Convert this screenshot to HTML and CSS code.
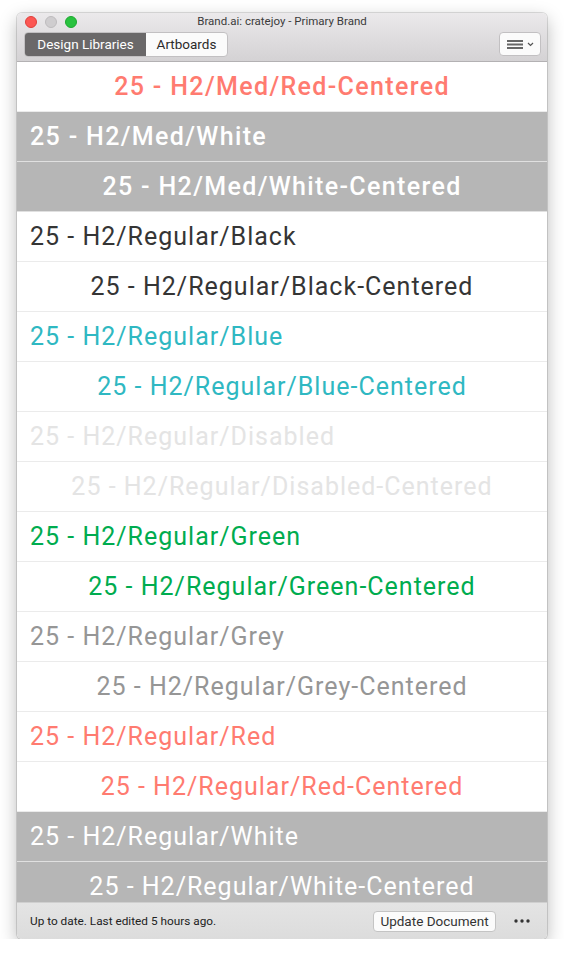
FILE: index.html
```html
<!DOCTYPE html>
<html>
<head>
<meta charset="utf-8">
<link rel="stylesheet" href="styles.css">
</head>
<body>
<div class="window">
  <div class="toolbar">
    <div class="titlerow">
      <div class="lights">
        <span class="light red"></span>
        <span class="light grey"></span>
        <span class="light green"></span>
      </div>
      <div class="title">Brand.ai: cratejoy - Primary Brand</div>
    </div>
    <div class="controls">
      <div class="segmented">
        <span class="seg active">Design Libraries</span>
        <span class="seg">Artboards</span>
      </div>
      <div class="menubtn">
        <svg width="34" height="14" viewBox="0 0 34 14">
          <rect x="4" y="3" width="16" height="2" fill="#666"/>
          <rect x="4" y="6.5" width="16" height="2" fill="#666"/>
          <rect x="4" y="10" width="16" height="2" fill="#666"/>
          <path d="M25 6 L27.5 8.5 L30 6" stroke="#555" stroke-width="1.2" fill="none"/>
        </svg>
      </div>
    </div>
  </div>
  <div class="list">
    <div class="row center red med">25 - H2/Med/Red-Centered</div>
    <div class="row grey-bg med">25 - H2/Med/White</div>
    <div class="row grey-bg center med">25 - H2/Med/White-Centered</div>
    <div class="row black">25 - H2/Regular/Black</div>
    <div class="row center black">25 - H2/Regular/Black-Centered</div>
    <div class="row blue">25 - H2/Regular/Blue</div>
    <div class="row center blue">25 - H2/Regular/Blue-Centered</div>
    <div class="row disabled">25 - H2/Regular/Disabled</div>
    <div class="row center disabled">25 - H2/Regular/Disabled-Centered</div>
    <div class="row green">25 - H2/Regular/Green</div>
    <div class="row center green">25 - H2/Regular/Green-Centered</div>
    <div class="row greytext">25 - H2/Regular/Grey</div>
    <div class="row center greytext">25 - H2/Regular/Grey-Centered</div>
    <div class="row red">25 - H2/Regular/Red</div>
    <div class="row center red">25 - H2/Regular/Red-Centered</div>
    <div class="row grey-bg">25 - H2/Regular/White</div>
    <div class="row grey-bg center">25 - H2/Regular/White-Centered</div>
  </div>
  <div class="statusbar">
    <span class="status">Up to date. Last edited 5 hours ago.</span>
    <span class="update">Update Document</span>
    <svg class="dots" width="16" height="6" viewBox="0 0 16 6">
      <circle cx="2" cy="3" r="1.7" fill="#333"/>
      <circle cx="8" cy="3" r="1.7" fill="#333"/>
      <circle cx="14" cy="3" r="1.7" fill="#333"/>
    </svg>
  </div>
</div>
</body>
</html>
```

FILE: styles.css
```css
html, body {
  margin: 0;
  padding: 0;
  background: #ffffff;
}
body {
  padding: 13px 17px 0 17px;
}
.window {
  width: 530px;
  height: 926px;
  display: flex;
  flex-direction: column;
  border-radius: 5px;
  overflow: hidden;
  box-shadow: 0 0 0 1px rgba(0,0,0,0.12), 0 6px 18px rgba(0,0,0,0.28);
  font-family: Roboto, "Liberation Sans", sans-serif;
}
.toolbar {
  height: 48px;
  flex: none;
  background: linear-gradient(#ebe9eb, #d4d2d4);
  border-bottom: 1px solid #b3b1b3;
  display: flex;
  flex-direction: column;
}
.titlerow {
  height: 17px;
  display: flex;
  align-items: center;
  position: relative;
}
.lights {
  display: flex;
  gap: 8px;
  padding-left: 8px;
  padding-top: 1px;
}
.light {
  width: 12px;
  height: 12px;
  border-radius: 50%;
  box-sizing: border-box;
}
.light.red { background: #fc5753; border: 0.5px solid #de3f3a; }
.light.grey { background: #cfcdcf; border: 0.5px solid #bdbbbd; }
.light.green { background: #29c23f; border: 0.5px solid #1da82f; }
.title {
  position: absolute;
  left: 0;
  right: 0;
  top: 1px;
  text-align: center;
  font-size: 11.5px;
  color: #3b3b3b;
}
.controls {
  display: flex;
  justify-content: space-between;
  align-items: center;
  padding: 1px 7px 0 7px;
  height: 24px;
  margin-top: 1px;
}
.segmented {
  display: flex;
  height: 23px;
  border-radius: 4px;
  overflow: hidden;
  border: 0.5px solid #c2c0c2;
  background: #fbfbfb;
}
.seg {
  display: flex;
  align-items: center;
  justify-content: center;
  font-size: 13.5px;
  color: #2b2b2b;
  width: 81px;
}
.seg.active {
  background: #6a6869;
  color: #ffffff;
  width: 121px;
}
.menubtn {
  width: 40px;
  height: 22px;
  border-radius: 4px;
  background: #fbfbfb;
  border: 0.5px solid #c2c0c2;
  display: flex;
  align-items: center;
  justify-content: center;
  margin-right: -1px;
}
.list {
  flex: 1;
  overflow: hidden;
  background: #ffffff;
}
.row {
  height: 50px;
  box-sizing: border-box;
  border-bottom: 1px solid #ebebeb;
  display: flex;
  align-items: center;
  padding-left: 13px;
  padding-bottom: 1px;
  font-family: Roboto, "Liberation Sans", sans-serif;
  font-size: 25px;
  white-space: nowrap;
  letter-spacing: 1px;
}
.row.center {
  justify-content: center;
  padding-left: 0;
}
.row.med { font-weight: 500; letter-spacing: 1.35px; }
.red { color: #ff7b70; }
.black { color: #353535; }
.blue { color: #2fb8c2; }
.disabled { color: #e4e4e4; }
.green { color: #00ac4f; }
.greytext { color: #969696; }
.row.grey-bg {
  background: #b6b6b6;
  color: #ffffff;
  border-bottom: 1px solid #e0e0e0;
}
.statusbar {
  height: 37px;
  flex: none;
  background: linear-gradient(#e4e4e4, #dcdcdc);
  border-top: 1px solid #cfcfcf;
  display: flex;
  align-items: center;
  padding: 0 17px 0 13px;
  box-sizing: border-box;
}
.status {
  font-size: 11.8px;
  color: #222;
  flex: 1;
}
.update {
  font-size: 13.5px;
  color: #333;
  background: #fbfbfb;
  border: 0.5px solid #c4c4c4;
  border-radius: 4px;
  height: 21px;
  width: 123px;
  display: flex;
  align-items: center;
  justify-content: center;
  box-sizing: border-box;
  margin-right: 18px;
}
.dots {
  display: block;
}
```
